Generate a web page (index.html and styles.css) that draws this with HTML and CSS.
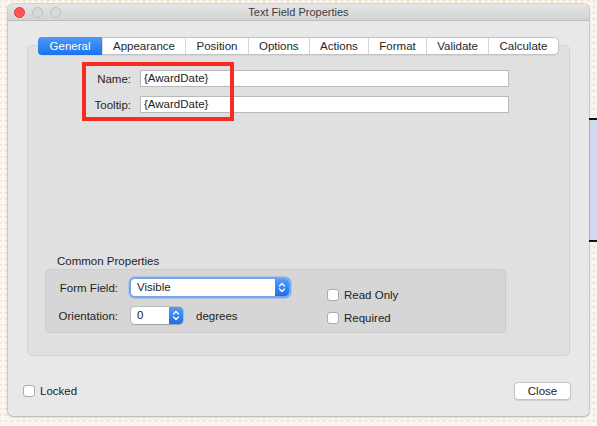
FILE: index.html
```html
<!DOCTYPE html>
<html>
<head>
<meta charset="utf-8">
<link rel="stylesheet" href="styles.css">
</head>
<body>
<div class="desk">
  <div class="side-doc"></div>
  <div class="window">
    <div class="titlebar">
      <div class="lights">
        <span class="light red"></span>
        <span class="light"></span>
        <span class="light"></span>
      </div>
      <div class="title">Text Field Properties</div>
      <div></div>
    </div>
    <div class="content">
      <div class="panel">
        <div class="tabs">
          <span class="tab active">General</span>
          <span class="tab">Appearance</span>
          <span class="tab">Position</span>
          <span class="tab">Options</span>
          <span class="tab">Actions</span>
          <span class="tab">Format</span>
          <span class="tab">Validate</span>
          <span class="tab">Calculate</span>
        </div>
        <div class="fields">
          <span class="field-label">Name:</span>
          <div class="input">{AwardDate}</div>
          <span class="field-label">Tooltip:</span>
          <div class="input">{AwardDate}</div>
          <div class="highlight"></div>
        </div>
        <div class="spacer"></div>
        <div class="group-title">Common Properties</div>
        <div class="group">
          <div class="group-left">
            <div class="grow first">
              <span class="glabel">Form Field:</span>
              <div class="popup focus">
                <span class="popup-text">Visible</span>
                <span class="arrows">
                  <svg width="8" height="11" viewBox="0 0 8 11"><path d="M1.5 4 L4 1.5 L6.5 4 M1.5 7 L4 9.5 L6.5 7" fill="none" stroke="#fff" stroke-width="1.3" stroke-linecap="round" stroke-linejoin="round"/></svg>
                </span>
              </div>
            </div>
            <div class="grow">
              <span class="glabel">Orientation:</span>
              <div class="popup small">
                <span class="popup-text">0</span>
                <span class="arrows">
                  <svg width="8" height="11" viewBox="0 0 8 11"><path d="M1.5 4 L4 1.5 L6.5 4 M1.5 7 L4 9.5 L6.5 7" fill="none" stroke="#fff" stroke-width="1.3" stroke-linecap="round" stroke-linejoin="round"/></svg>
                </span>
              </div>
              <span class="unit">degrees</span>
            </div>
          </div>
          <div class="checks">
            <label class="check"><span class="box"></span>Read Only</label>
            <label class="check"><span class="box"></span>Required</label>
          </div>
        </div>
      </div>
      <div class="footer">
        <label class="check"><span class="box"></span>Locked</label>
        <button class="btn">Close</button>
      </div>
    </div>
  </div>
</div>
</body>
</html>
```
FILE: styles.css
```css
* { box-sizing: border-box; }
html, body { margin: 0; padding: 0; }
body {
  width: 597px;
  height: 426px;
  overflow: hidden;
  font-family: "Liberation Sans", Arial, sans-serif;
  font-size: 11.5px;
  color: #232323;
  background-color: #faf6ef;
  background-image:
    linear-gradient(135deg, #efe6d6 25%, transparent 25%),
    linear-gradient(225deg, #efe6d6 25%, transparent 25%);
  background-size: 6px 6px;
}
.desk {
  position: relative;
  width: 597px;
  height: 426px;
  padding: 4px 0 0 8px;
}
.side-doc {
  position: absolute;
  left: 589px;
  top: 118px;
  width: 20px;
  height: 124px;
  background: #d3d9f1;
  border-top: 2px solid #111;
  border-bottom: 2px solid #111;
}
.window {
  position: relative;
  width: 581px;
  height: 412px;
  background: #e8e8e8;
  border-radius: 5px;
  box-shadow: 0 0 0 1px rgba(0,0,0,0.12), 0 1px 3px rgba(0,0,0,0.18);
  display: flex;
  flex-direction: column;
}
.titlebar {
  height: 17px;
  border-bottom: 1px solid #bdbdbd;
  background: linear-gradient(#e4e4e4, #d4d4d4);
  border-radius: 5px 5px 0 0;
  display: grid;
  grid-template-columns: 1fr auto 1fr;
  align-items: center;
}
.lights {
  display: flex;
  gap: 7px;
  padding-left: 6px;
}
.light {
  width: 11px;
  height: 11px;
  border-radius: 50%;
  background: #d9d9d9;
  border: 1px solid #c0c0c0;
}
.light.red {
  background: #fc5753;
  border-color: #df3d38;
}
.title {
  font-size: 11px;
  color: #3d3d3d;
  line-height: 16px;
}
.content {
  flex: 1;
  display: flex;
  flex-direction: column;
  padding: 24px 19px 0 19px;
}
.panel {
  height: 311px;
  border: 1px solid #d2d2d2;
  background: #e0e0e0;
  border-radius: 5px;
  display: flex;
  flex-direction: column;
}
.tabs {
  align-self: center;
  margin-top: -9px;
  display: flex;
  height: 18px;
  background: #fff;
  border: 1px solid #c3c3c3;
  border-radius: 5px;
  box-shadow: 0 1px 0 rgba(0,0,0,0.05);
}
.tab {
  padding: 0 10.25px;
  line-height: 16px;
  border-left: 1px solid #d6d6d6;
  color: #262626;
  white-space: nowrap;
}
.tab:first-child { border-left: none; }
.tab.active {
  background: linear-gradient(#4b9af9, #1c71ee);
  color: #fff;
  border-radius: 4px 0 0 4px;
  margin: -1px 0 -1px -1px;
  line-height: 18px;
  padding: 0 11.25px;
}
.fields {
  position: relative;
  margin-top: 15px;
  display: grid;
  grid-template-columns: 103px 369px;
  column-gap: 9px;
  row-gap: 9px;
  align-items: center;
}
.field-label {
  text-align: right;
}
.input {
  height: 17px;
  background: #fff;
  border: 1px solid #b9b9b9;
  padding: 0 3px;
  line-height: 15px;
}
.highlight {
  position: absolute;
  left: 54px;
  top: -8px;
  width: 152px;
  height: 59px;
  border: 4px solid #f72b20;
}
.spacer { flex: 1; }
.group-title {
  margin-left: 29px;
  line-height: 14px;
  margin-bottom: 1px;
}
.group {
  margin: 0 0 22px 17px;
  width: 461px;
  height: 64px;
  background: #d6d6d6;
  border: 1px solid #cbcbcb;
  border-radius: 4px;
  display: flex;
}
.group-left {
  display: flex;
  flex-direction: column;
  padding-top: 9px;
  gap: 11px;
}
.grow {
  display: flex;
  align-items: center;
  height: 17px;
}
.glabel {
  width: 72px;
  text-align: right;
  margin-right: 13px;
}
.popup {
  display: flex;
  align-items: stretch;
  width: 158px;
  height: 17px;
  background: #fff;
  border-radius: 4px;
  box-shadow: 0 0 0 1px rgba(0,0,0,0.12), 0 1px 1px rgba(0,0,0,0.15);
  overflow: hidden;
}
.popup.focus {
  box-shadow: 0 0 0 2px #78a6ed, 0 0 0 3px rgba(120,166,237,0.35);
}
.popup.small { width: 52px; }
.popup-text {
  flex: 1;
  padding-left: 6px;
  line-height: 17px;
}
.arrows {
  width: 14px;
  background: linear-gradient(#4f9cf9, #1e6fe9);
  display: flex;
  align-items: center;
  justify-content: center;
}
.unit { margin-left: 13px; }
.checks {
  display: flex;
  flex-direction: column;
  padding-top: 19px;
  gap: 11px;
  margin-left: 38px;
}
.check {
  display: flex;
  align-items: center;
  gap: 5px;
  height: 12px;
}
.box {
  width: 12px;
  height: 12px;
  background: #fff;
  border: 1px solid #ababab;
  border-radius: 3px;
}
.footer {
  margin-top: 26px;
  margin-left: -4px;
  margin-right: -1px;
  display: flex;
  justify-content: space-between;
  align-items: center;
}
.btn {
  width: 57px;
  height: 18px;
  padding: 0;
  font: inherit;
  font-size: 11.5px;
  color: #222;
  background: #fff;
  border: 1px solid #c4c4c4;
  border-radius: 4px;
  box-shadow: 0 1px 1px rgba(0,0,0,0.1);
  margin-top: 0;
}
```
